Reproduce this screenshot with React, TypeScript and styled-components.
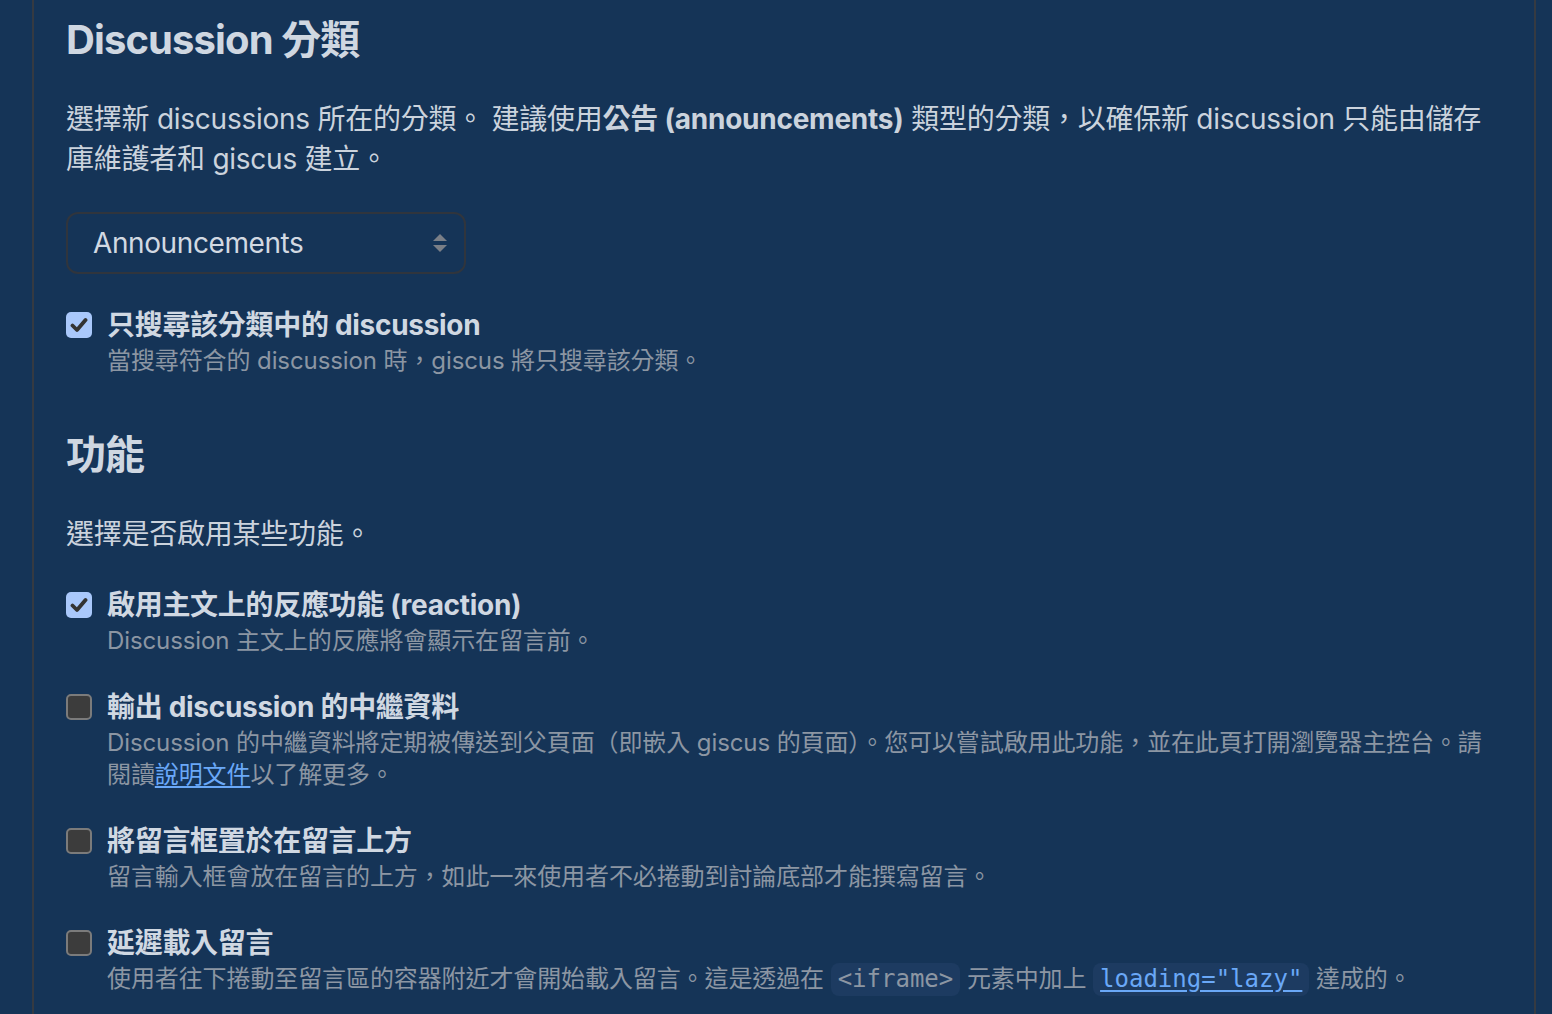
import React from 'react';
import styled, { createGlobalStyle } from 'styled-components';

const GlobalStyle = createGlobalStyle`
  html, body {
    margin: 0;
    padding: 0;
    background: #153457;
  }
  body {
    font-family: Inter, "Noto Sans CJK TC", sans-serif;
    color: #cbd3dd;
    -webkit-font-smoothing: antialiased;
  }
`;

const Page = styled.div`
  display: flex;
  justify-content: center;
  min-height: 1014px;
`;

const Column = styled.main`
  box-sizing: border-box;
  width: 1504px;
  margin-left: 32px;
  margin-right: 16px;
  min-height: 1014px;
  border-left: 2px solid #353a42;
  border-right: 2px solid #353a42;
  padding: 15px 32px 40px 32px;
`;

const Section = styled.section<{ $gap?: number }>`
  margin-top: ${p => p.$gap ?? 0}px;
`;

const Heading = styled.h2`
  margin: 0;
  font-size: 40px;
  line-height: 50px;
  font-weight: 700;
  color: #cfd7e1;
  letter-spacing: -0.9px;
`;

const Lead = styled.p`
  margin: 34px 0 0 0;
  font-size: 28px;
  line-height: 40px;
  letter-spacing: -0.25px;
  color: #cbd3dd;
  strong {
    font-weight: 700;
  }
`;

const SelectBox = styled.div`
  box-sizing: border-box;
  margin-top: 33px;
  width: 400px;
  height: 62px;
  border: 2px solid #30353d;
  border-radius: 12px;
  display: flex;
  align-items: center;
  justify-content: space-between;
  padding: 0 16px 0 25px;
  font-size: 28px;
  letter-spacing: -0.4px;
  color: #d2d9e2;
`;

const Options = styled.div`
  display: flex;
  flex-direction: column;
  gap: 31px;
  margin-top: 32px;
`;

const Option = styled.label`
  display: grid;
  grid-template-columns: 26px 1fr;
  column-gap: 15px;
`;

const Box = styled.span<{ $checked: boolean }>`
  box-sizing: border-box;
  width: 26px;
  height: 26px;
  margin-top: 6px;
  border-radius: 5px;
  display: flex;
  align-items: center;
  justify-content: center;
  background: ${p => (p.$checked ? '#a9c8fb' : '#3c3c3c')};
  border: ${p => (p.$checked ? 'none' : '2px solid #7b7b7b')};
`;

const OptionText = styled.div`
  display: flex;
  flex-direction: column;
`;

const OptionTitle = styled.span`
  font-size: 28px;
  line-height: 38px;
  font-weight: 700;
  letter-spacing: -0.3px;
  color: #d0d8e2;
`;

const OptionDesc = styled.span`
  font-size: 24px;
  line-height: 32px;
  margin-top: 1px;
  letter-spacing: -0.1px;
  color: #8c96a3;
`;

const Link = styled.a`
  color: #6aa8f7;
  text-decoration: underline;
  text-underline-offset: 3px;
`;

const Code = styled.code`
  font-family: "DejaVu Sans Mono", "Liberation Mono", monospace;
  font-size: 24px;
  letter-spacing: 0;
  background: #1d3b61;
  border-radius: 8px;
  padding: 2px 7px 3px;
  color: #8c96a3;
`;

const SortIcon = () => (
  <svg width="16" height="22" viewBox="0 0 16 22">
    <path d="M8 2 L15 9 L1 9 Z" fill="#7a7f87" />
    <path d="M1 13 L15 13 L8 20 Z" fill="#7a7f87" />
  </svg>
);

const Check = () => (
  <svg width="18" height="16" viewBox="0 0 18 16">
    <path d="M2.5 8.5 L7 13 L15.5 3" fill="none" stroke="#333" strokeWidth="3.8" strokeLinecap="round" strokeLinejoin="round" />
  </svg>
);

interface CheckOptionProps {
  checked: boolean;
  title: React.ReactNode;
  children: React.ReactNode;
}

const CheckOption: React.FC<CheckOptionProps> = ({ checked, title, children }) => (
  <Option>
    <Box $checked={checked}>{checked && <Check />}</Box>
    <OptionText>
      <OptionTitle>{title}</OptionTitle>
      <OptionDesc>{children}</OptionDesc>
    </OptionText>
  </Option>
);

export default function App() {
  return (
    <Page>
      <GlobalStyle />
      <Column>
        <Section>
          <Heading>Discussion 分類</Heading>
          <Lead>
            選擇新 discussions 所在的分類。 建議使用<strong>公告 (announcements)</strong> 類型的分類，以確保新 discussion 只能由儲存庫維護者和 giscus 建立。
          </Lead>
          <SelectBox>
            <span>Announcements</span>
            <SortIcon />
          </SelectBox>
          <Options>
            <CheckOption checked title="只搜尋該分類中的 discussion">
              當搜尋符合的 discussion 時，giscus 將只搜尋該分類。
            </CheckOption>
          </Options>
        </Section>

        <Section $gap={53}>
          <Heading>功能</Heading>
          <Lead>選擇是否啟用某些功能。</Lead>
          <Options>
            <CheckOption checked title="啟用主文上的反應功能 (reaction)">
              Discussion 主文上的反應將會顯示在留言前。
            </CheckOption>
            <CheckOption checked={false} title="輸出 discussion 的中繼資料">
              Discussion 的中繼資料將定期被傳送到父頁面（即嵌入 giscus 的頁面）。您可以嘗試啟用此功能，並在此頁打開瀏覽器主控台。請閱讀<Link href="#">說明文件</Link>以了解更多。
            </CheckOption>
            <CheckOption checked={false} title="將留言框置於在留言上方">
              留言輸入框會放在留言的上方，如此一來使用者不必捲動到討論底部才能撰寫留言。
            </CheckOption>
            <CheckOption checked={false} title="延遲載入留言">
              使用者往下捲動至留言區的容器附近才會開始載入留言。這是透過在 <Code>&lt;iframe&gt;</Code> 元素中加上 <Code><Link href="#">loading="lazy"</Link></Code> 達成的。
            </CheckOption>
          </Options>
        </Section>
      </Column>
    </Page>
  );
}
